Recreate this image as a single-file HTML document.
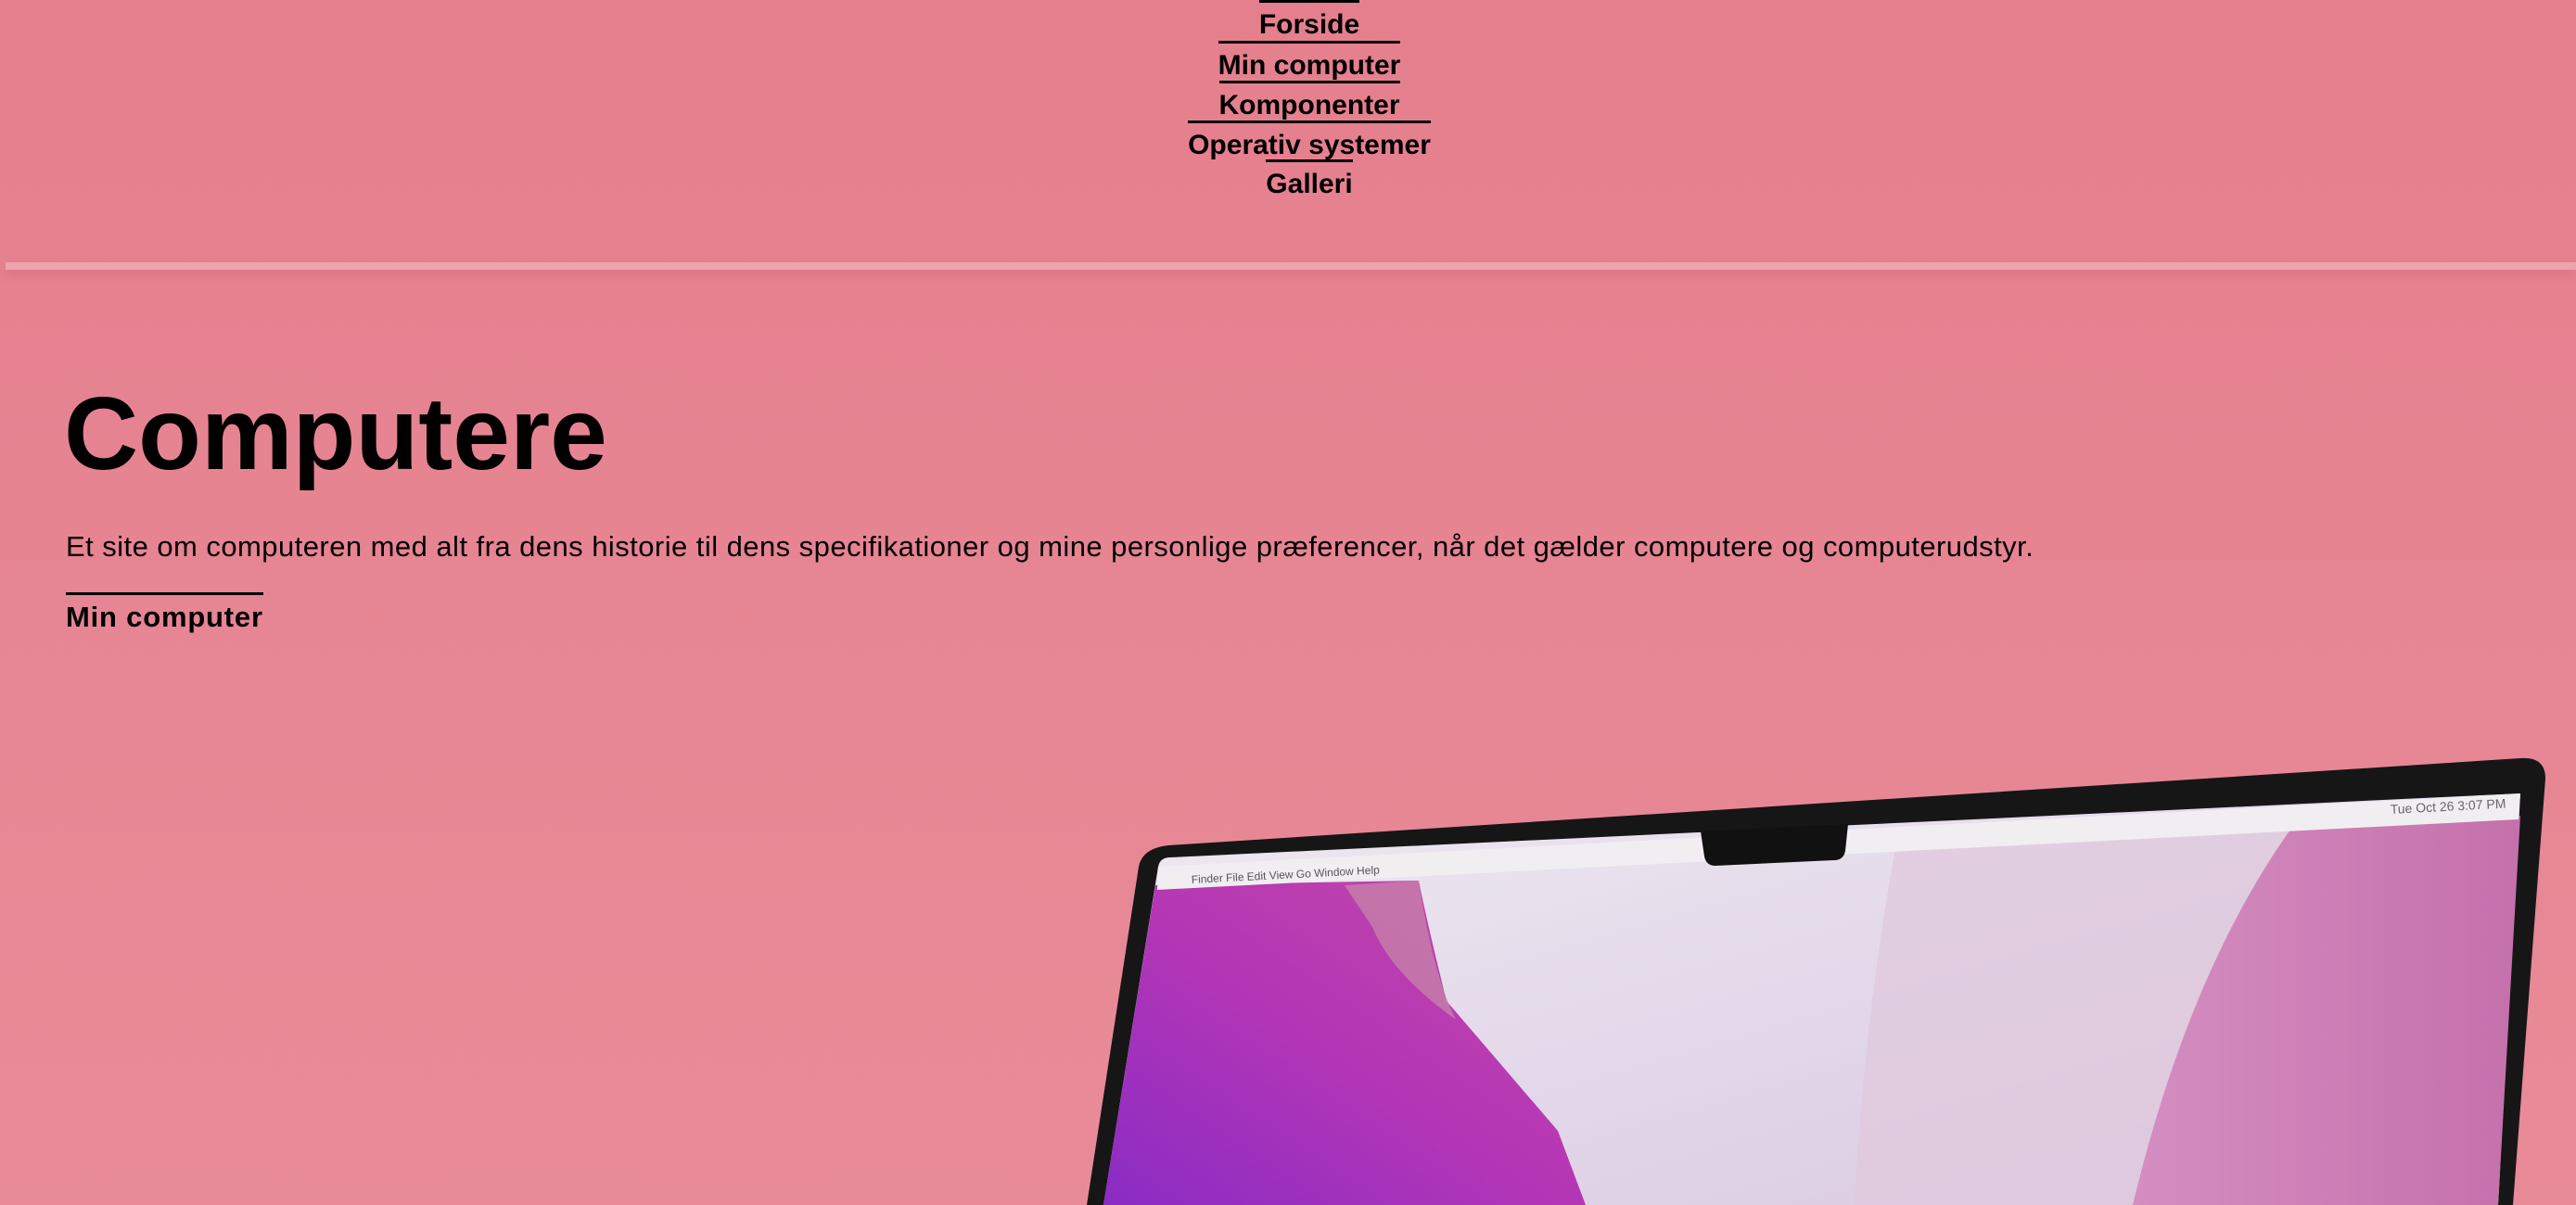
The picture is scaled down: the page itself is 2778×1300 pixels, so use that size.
<!DOCTYPE html>
<html><head><meta charset="utf-8"><style>
html,body{margin:0;padding:0}
body{width:2778px;height:1300px;overflow:hidden;position:relative;background:linear-gradient(#e57f8e,#e88b98);font-family:"Liberation Sans",Arial,sans-serif;color:#000}
.nl{position:absolute;left:0;width:2824px;text-align:center;}
.nl span{display:inline-block;border-top:3px solid #000;padding-top:4px;font-weight:bold;font-size:30px;line-height:40px}
.rule{position:absolute;left:6px;right:0;top:283px;height:8px;background:#eea3ad;box-shadow:0 6px 10px rgba(180,70,90,.25)}
h1{position:absolute;left:69px;top:398px;margin:0;font-size:111px;line-height:140px;font-weight:bold}
p{position:absolute;left:71px;top:570px;margin:0;font-size:31px;line-height:40px;white-space:nowrap;letter-spacing:0.45px}
.mc{position:absolute;left:71px;top:639px;border-top:3px solid #000;padding-top:4px;font-weight:bold;font-size:31px;line-height:40px;letter-spacing:0.8px}
svg{position:absolute;left:0;top:0}
</style></head><body>
<div class="nl" style="top:-40px"><span>Forsideeee</span></div>
<div class="nl" style="top:0px"><span>Forside</span></div>
<div class="nl" style="top:44px"><span>Min computer</span></div>
<div class="nl" style="top:87px"><span>Komponenter</span></div>
<div class="nl" style="top:130px"><span>Operativ systemer</span></div>
<div class="nl" style="top:172px"><span>Galleri</span></div>
<div class="rule"></div>
<h1>Computere</h1>
<p>Et site om computeren med alt fra dens historie til dens specifikationer og mine personlige præferencer, når det gælder computere og computerudstyr.</p>
<div class="mc">Min computer</div>
<svg width="2778" height="1300" viewBox="0 0 2778 1300">
<defs>
<linearGradient id="pur" x1="0" y1="1" x2="1" y2="0"><stop offset="0" stop-color="#8a2cc4"/><stop offset="0.5" stop-color="#b536b5"/><stop offset="1" stop-color="#c24aa8"/></linearGradient>
<linearGradient id="mid" x1="0" y1="0" x2="1" y2="1"><stop offset="0" stop-color="#eeeaf2"/><stop offset="1" stop-color="#d8c6e0"/></linearGradient>
<linearGradient id="pk" x1="0" y1="0" x2="1" y2="0"><stop offset="0" stop-color="#d48ec0"/><stop offset="1" stop-color="#c570ac"/></linearGradient>
</defs>
<path d="M1228 935 Q1232 915 1260 912 L2718 818 Q2745 816 2745 840 L2710 1300 L1172 1300 Z" fill="#161616"/>
<path d="M1249 935 Q1251 925 1262 925 L2718 856 L2694 1300 L1190 1300 Z" fill="url(#mid)"/>
<path d="M1246 955 L1530 950 Q1540 1000 1560 1080 Q1620 1150 1680 1220 L1710 1300 L1190 1300 Z" fill="url(#pur)"/>
<path d="M1450 955 L1530 950 Q1545 1050 1570 1100 Q1500 1050 1480 1000 Z" fill="#c78aa8" opacity="0.7"/>
<path d="M2045 910 L2510 895 Q2420 1000 2380 1120 L2330 1300 L2000 1300 Q2010 1100 2045 910 Z" fill="#e0c8dc" opacity="0.7"/>
<path d="M2470 895 L2718 880 L2694 1300 L2300 1300 Q2360 1050 2470 895 Z" fill="url(#pk)"/>
<path d="M1249 935 L2718 856 L2716 884 L1248 960 Z" fill="#f1eef2"/>
<path d="M1834 897 L1993 889 L1990 918 Q1988 928 1978 928 L1850 934 Q1840 934 1838 924 Z" fill="#111"/>
<text x="1285" y="953" font-size="12" fill="#555" font-family="Liberation Sans" transform="rotate(-3 1285 953)">Finder   File   Edit   View   Go   Window   Help</text>
<text x="2578" y="878" font-size="14" fill="#666" font-family="Liberation Sans" transform="rotate(-3 2578 878)">Tue Oct 26  3:07 PM</text>
</svg>
</body></html>
